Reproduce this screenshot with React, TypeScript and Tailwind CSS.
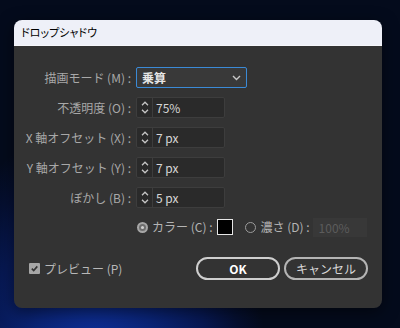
import React from "react";

const Up = () => (
  <svg width="8" height="5" viewBox="0 0 8 5">
    <path d="M1 4.2 L4 1.2 L7 4.2" stroke="currentColor" strokeWidth="1.3" fill="none" />
  </svg>
);

const Down = () => (
  <svg width="8" height="5" viewBox="0 0 8 5">
    <path d="M1 0.8 L4 3.8 L7 0.8" stroke="currentColor" strokeWidth="1.3" fill="none" />
  </svg>
);

const Spinner = ({ value }: { value: string }) => (
  <div className="flex h-[21px] w-[89px] rounded-[2px] border border-[#3d3d3d] bg-[#2a2a2a]">
    <div className="flex w-[16px] flex-col items-center justify-center gap-[3px] border-r border-[#3d3d3d] text-[#c6c6c6]">
      <Up />
      <Down />
    </div>
    <span className="pl-[3px] text-[12px] leading-[19px] text-[#d6d6d6]">{value}</span>
  </div>
);

const Label = ({ text }: { text: string }) => (
  <div className="text-right text-[12px] leading-[21px] text-[#a8a8a8]">{text}</div>
);

export default function App() {
  return (
    <div className="h-[328px] w-[400px] overflow-hidden bg-[#040b1c] bg-[radial-gradient(ellipse_170px_230px_at_95px_355px,#0e309a_0%,#0a2477_35%,#071852_65%,#050f30_85%,#040b1c_100%)] pl-[14px] pt-[20px] font-['Noto_Sans_CJK_JP','Noto_Sans',sans-serif]">
      <div className="flex h-[288px] w-[368px] flex-col overflow-hidden rounded-[8px] shadow-[0_4px_16px_rgba(0,0,0,0.5)]">
        {/* title bar */}
        <div className="flex h-[26px] items-center border-b border-[#f6f7fb] bg-[#eef0f8] pl-[7px] text-[11px] text-black [font-feature-settings:'palt']">
          ドロップシャドウ
        </div>

        {/* body */}
        <div className="flex-1 bg-[#333333]">
          <div className="grid grid-cols-[117px_auto] items-center gap-x-[5px] gap-y-[9px] pt-[21px]">
            <Label text="描画モード (M) :" />
            <div className="flex h-[21px] w-[111px] items-center justify-between rounded-[2px] border border-[#3b8ad6] bg-[#393939] pl-[5px] pr-[5px]">
              <span className="text-[12px] font-bold text-[#e6e6e6]">乗算</span>
              <svg width="9" height="6" viewBox="0 0 9 6" className="text-[#c8c8c8]">
                <path d="M1 1 L4.5 4.5 L8 1" stroke="currentColor" strokeWidth="1.4" fill="none" />
              </svg>
            </div>

            <Label text="不透明度 (O) :" />
            <Spinner value="75%" />

            <Label text="X 軸オフセット (X) :" />
            <Spinner value="7 px" />

            <Label text="Y 軸オフセット (Y) :" />
            <Spinner value="7 px" />

            <Label text="ぼかし (B) :" />
            <Spinner value="5 px" />

            <div />
            <div className="flex h-[20px] items-center">
              <span className="ml-[1px] flex h-[11px] w-[11px] items-center justify-center rounded-full border-2 border-[#a6a6a6] bg-[#6e6e6e]">
                <span className="h-[3px] w-[3px] rounded-full bg-[#d0d0d0]" />
              </span>
              <span className="ml-[4px] text-[12px] text-[#b4b4b4]">カラー (C) :</span>
              <span className="ml-[5px] h-[16px] w-[16px] border-[1.5px] border-[#e6e6e6] bg-black" />
              <span className="ml-[12px] h-[11px] w-[11px] rounded-full border-[1.5px] border-[#9c9c9c]" />
              <span className="ml-[4px] text-[12px] text-[#b4b4b4]">濃さ (D) :</span>
              <span className="ml-[3px] h-[19px] w-[54px] bg-[#383838] pl-[6px] text-[12px] leading-[19px] text-[#5c5c5c]">
                100%
              </span>
            </div>
          </div>

          {/* footer */}
          <div className="mt-[20px] flex h-[23px] items-center justify-between pl-[15px] pr-[14px]">
            <div className="flex items-center">
              <span className="flex h-[11px] w-[11px] items-center justify-center rounded-[1px] bg-[#a6a6a6]">
                <svg width="9" height="9" viewBox="0 0 9 9">
                  <path d="M1.8 4.6 L3.7 6.5 L7.3 2.4" stroke="#333" strokeWidth="1.6" fill="none" />
                </svg>
              </span>
              <span className="ml-[4px] text-[12px] text-[#b8b8b8]">プレビュー (P)</span>
            </div>
            <div className="flex gap-[4px]">
              <button className="flex h-[23px] w-[84px] items-center justify-center rounded-full border-2 border-[#cfcfcf] text-[12px] font-bold text-white">
                OK
              </button>
              <button className="flex h-[23px] w-[84px] items-center justify-center rounded-full border-2 border-[#b4b4b4] text-[12px] text-[#d8d8d8]">
                キャンセル
              </button>
            </div>
          </div>
        </div>
      </div>
    </div>
  );
}
